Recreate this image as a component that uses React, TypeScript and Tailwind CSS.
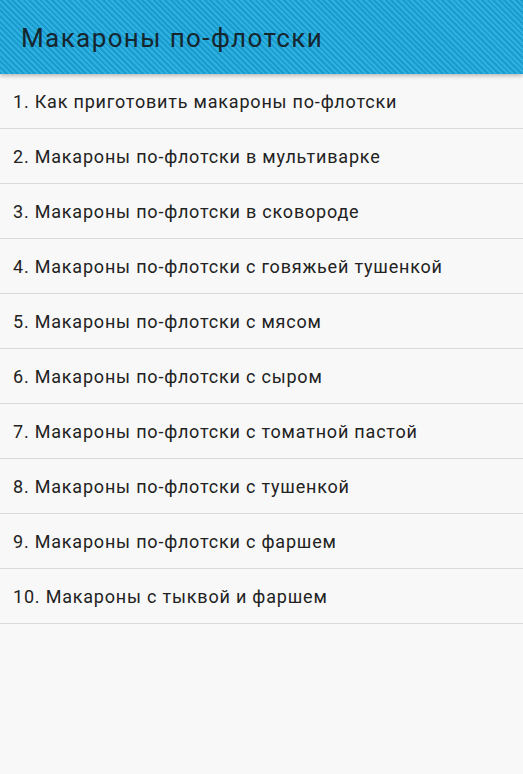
const recipes = [
  "1. Как приготовить макароны по-флотски",
  "2. Макароны по-флотски в мультиварке",
  "3. Макароны по-флотски в сковороде",
  "4. Макароны по-флотски с говяжьей тушенкой",
  "5. Макароны по-флотски с мясом",
  "6. Макароны по-флотски с сыром",
  "7. Макароны по-флотски с томатной пастой",
  "8. Макароны по-флотски с тушенкой",
  "9. Макароны по-флотски с фаршем",
  "10. Макароны с тыквой и фаршем",
];

export default function App() {
  return (
    <div className="flex h-[774px] w-[523px] flex-col overflow-hidden bg-[#f8f8f8] font-['Roboto',sans-serif]">
      <header className="relative z-10 flex h-[74px] shrink-0 items-center bg-[#1ea2d4] bg-[repeating-linear-gradient(45deg,#1b9ccf_0px,#1b9ccf_2px,#2eb0e0_2px,#2eb0e0_4px)] px-[21px] pt-[2px] shadow-[0_2px_4px_rgba(0,0,0,0.25)]">
        <h1 className="text-[26px] leading-none tracking-[1.4px] text-[#16262e]">Макароны по-флотски</h1>
      </header>
      <ul>
        {recipes.map((title) => (
          <li
            key={title}
            className="flex h-[55px] items-center border-b border-[#dadada] pl-[13px] pt-[1px] text-[18px] tracking-[0.8px] text-[#222222]"
          >
            {title}
          </li>
        ))}
      </ul>
    </div>
  );
}
